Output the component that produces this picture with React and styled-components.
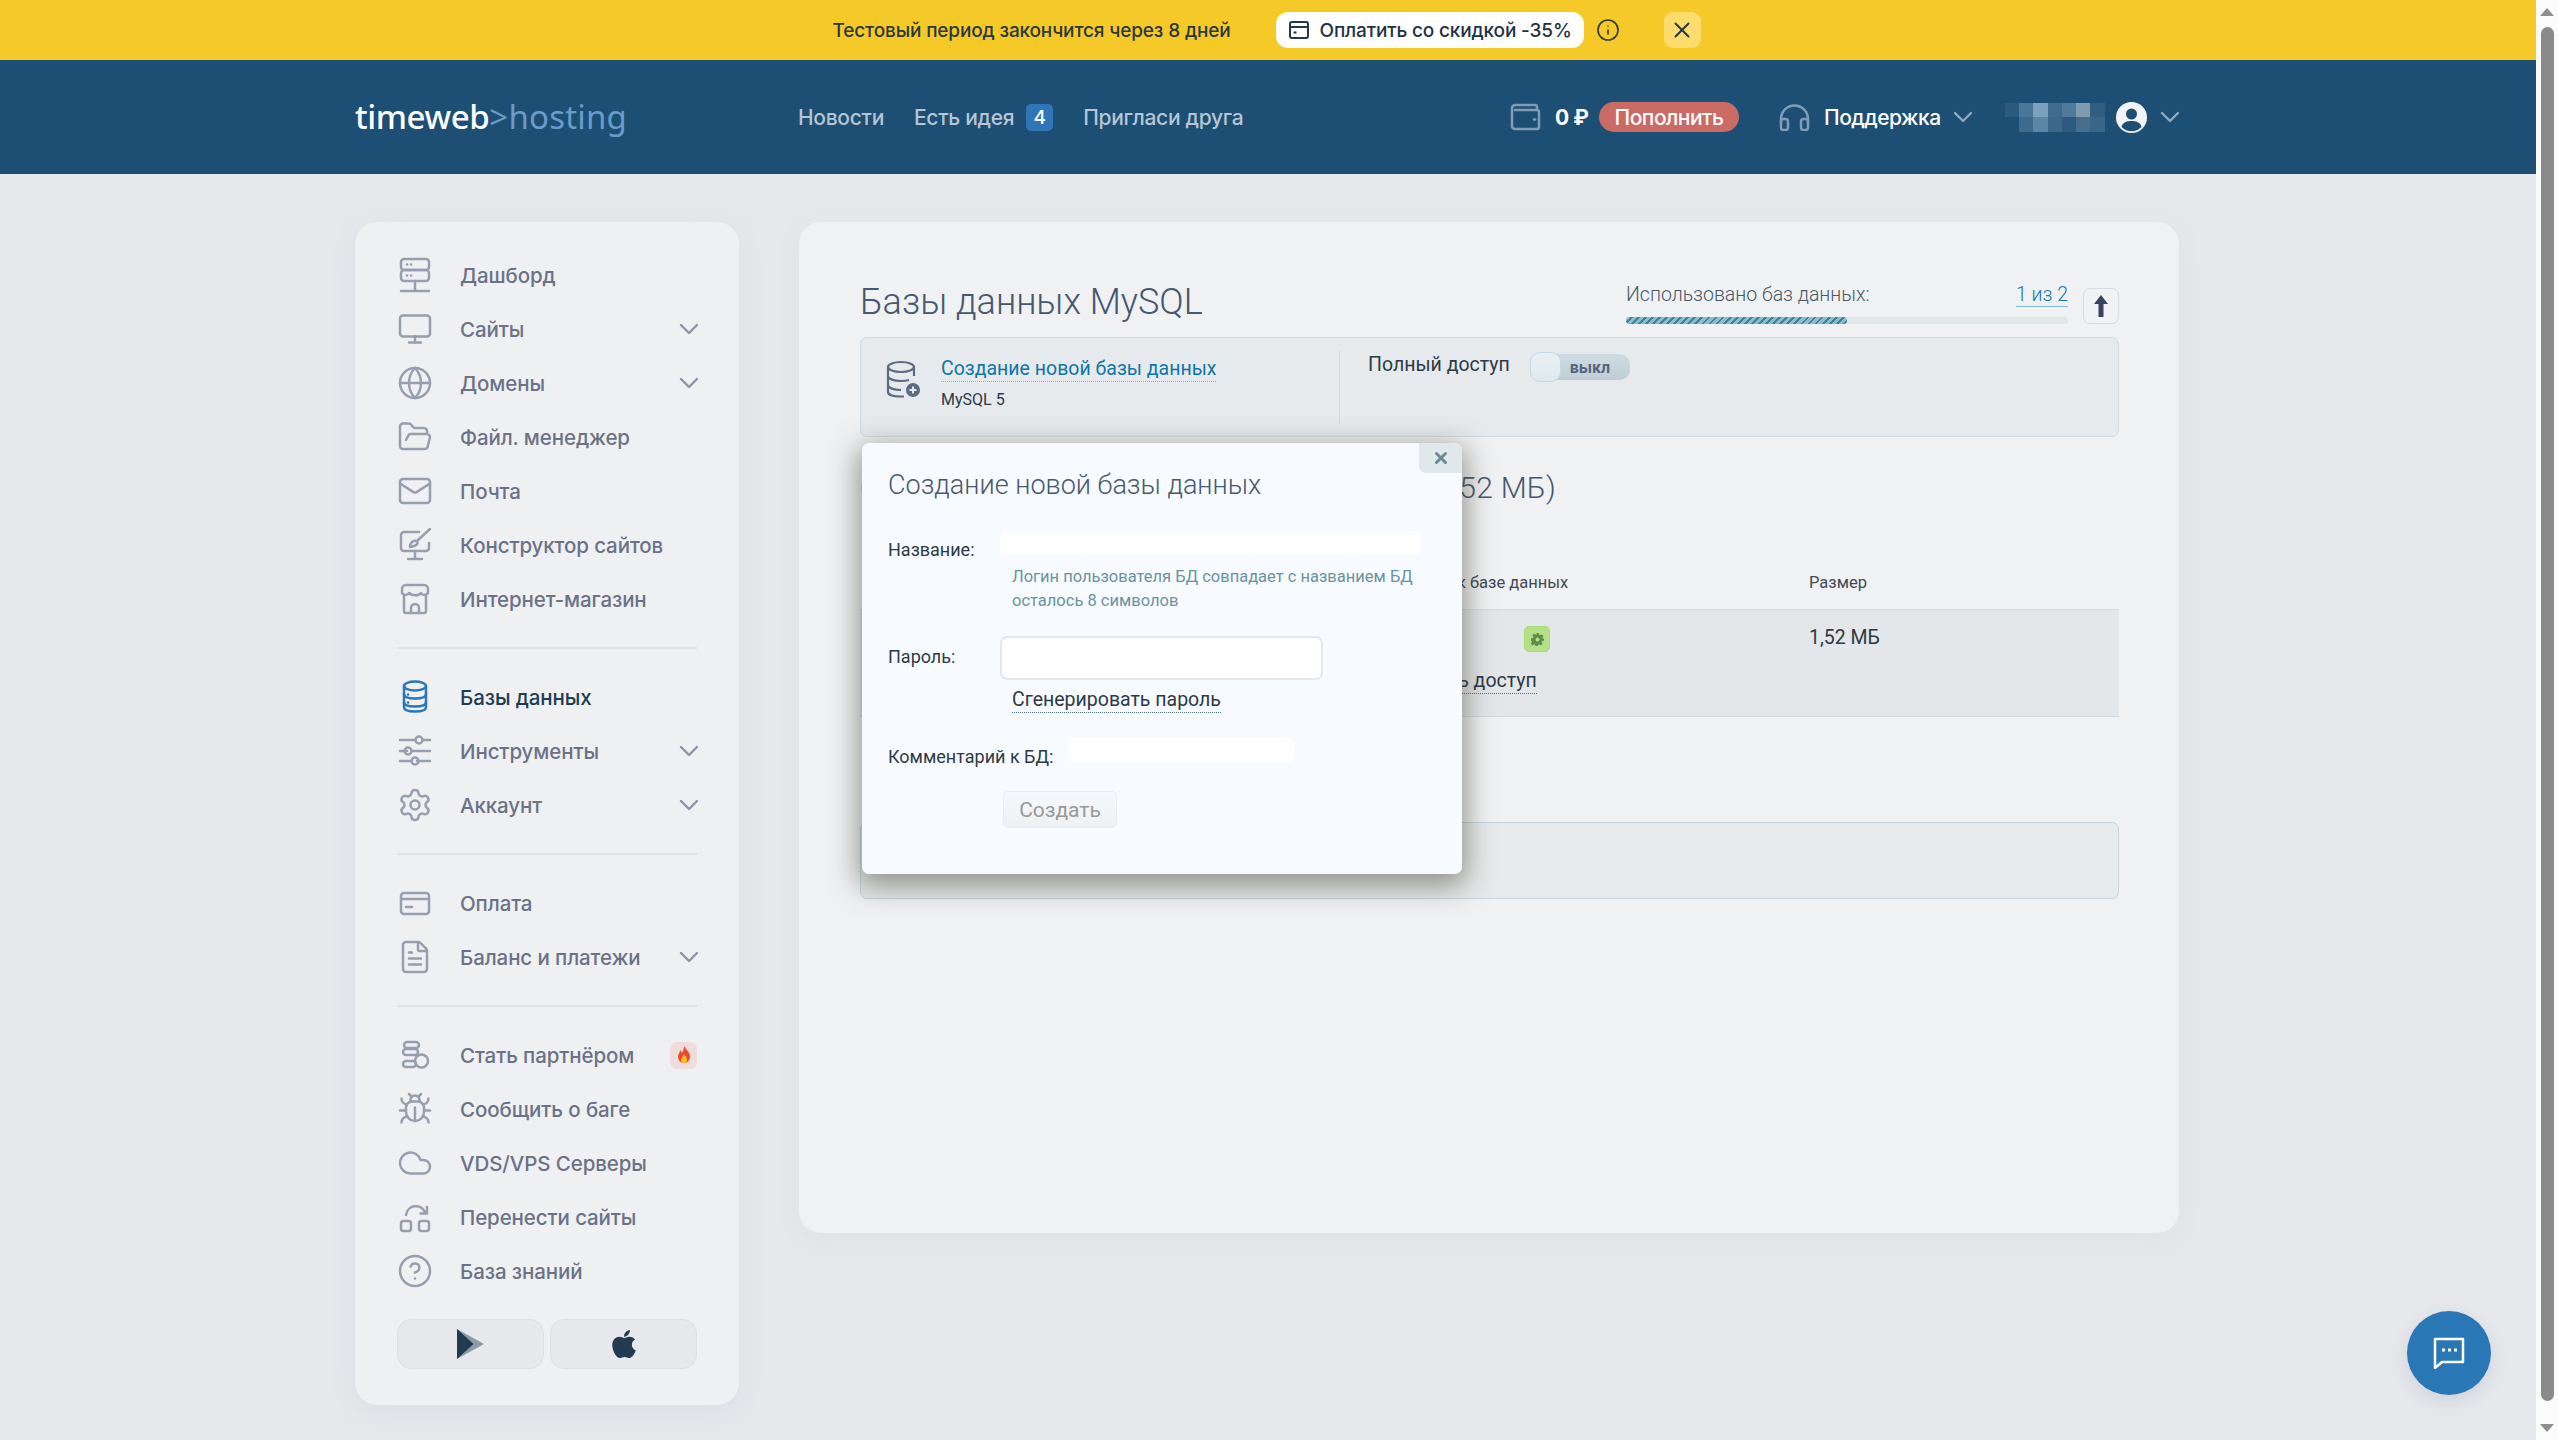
import React from 'react';
import styled, { createGlobalStyle } from 'styled-components';
import {
  Globe, FolderOpen, Mail, Settings, FileText, Bug, Cloud, CircleHelp,
  ChevronDown, X, Info, Monitor,
} from 'lucide-react';
import { FaApple } from 'react-icons/fa';

const GlobalStyle = createGlobalStyle`
  html, body { margin: 0; padding: 0; height: 100%; overflow: hidden; }
  body { background: #e6e8ec; font-family: Roboto, "Liberation Sans", sans-serif; }
  * { box-sizing: border-box; }
`;

const uiFont = `Inter, "Noto Sans", sans-serif`;

const Shell = styled.div`
  display: flex;
  width: 2558px;
  height: 1440px;
  overflow: hidden;
`;

const Page = styled.div`
  width: 2536px;
  display: flex;
  flex-direction: column;
  position: relative;
`;

const ScrollTrack = styled.div`
  width: 22px;
  background: #fbfbfb;
  display: flex;
  flex-direction: column;
  align-items: center;
  padding: 8px 0;
`;

const ScrollArrowUp = styled.div`
  width: 0;
  height: 0;
  border-left: 7px solid transparent;
  border-right: 7px solid transparent;
  border-bottom: 8px solid #8f8f8f;
`;

const ScrollArrowDown = styled(ScrollArrowUp)`
  border-bottom: 0;
  border-top: 8px solid #8f8f8f;
  margin-top: 23px;
`;

const ScrollThumb = styled.div`
  width: 13px;
  height: 1374px;
  margin-top: 11px;
  background: #8a8a8a;
  border-radius: 7px;
`;

// banner
const Banner = styled.div`
  height: 60px;
  padding-right: 3px;
  background: #f5ca28;
  display: flex;
  align-items: center;
  justify-content: center;
  font-family: ${uiFont};
  font-size: 19px;
  font-weight: 500;
  letter-spacing: -0.15px;
  color: #2c3842;
`;

const PayButton = styled.button`
  height: 36px;
  width: 308px;
  margin-left: 45px;
  border: 0;
  border-radius: 12px;
  background: #fff;
  color: #1e3344;
  font: inherit;
  letter-spacing: inherit;
  display: flex;
  align-items: center;
  gap: 11px;
  padding: 0 0 0 13px;
`;

const InfoWrap = styled.span`
  display: flex;
  margin-left: 12px;
  color: #2c3842;
`;

const BannerClose = styled.button`
  width: 37px;
  height: 36px;
  margin-left: 44px;
  border: 0;
  padding: 0;
  border-radius: 9px;
  background: #fbdc6c;
  color: #24384a;
  display: flex;
  align-items: center;
  justify-content: center;
`;

// top header
const Header = styled.header`
  height: 114px;
  background: #1d4e73;
  padding-left: 355px;
  display: flex;
  align-items: center;
  font-family: ${uiFont};
`;

const Logo = styled.div`
  width: 443px;
  padding-bottom: 2px;
  font-family: "Noto Sans", sans-serif;
  font-size: 33px;
  font-weight: 500;
  letter-spacing: -0.4px;
  color: #fff;
  span { color: #6a9ccb; font-weight: 400; letter-spacing: 0.2px; }
`;

const Nav = styled.nav`
  display: flex;
  align-items: center;
  width: 712px;
  font-size: 21px;
  font-weight: 500;
  letter-spacing: -0.3px;
  color: #b7c5d3;
`;

const NavLink = styled.a`
  margin-right: ${p => p.$gap}px;
`;

const CountBadge = styled.span`
  width: 27px;
  height: 27px;
  margin-right: 30px;
  border-radius: 5px;
  background: #2e76b5;
  color: #fff;
  font-size: 19px;
  display: flex;
  align-items: center;
  justify-content: center;
`;

const HeaderRight = styled.div`
  display: flex;
  align-items: center;
  color: #fff;
  font-size: 21px;
  font-weight: 500;
  letter-spacing: -0.5px;
`;

const Balance = styled.span`
  width: 32px;
  margin: 0 12px 0 14px;
  font-weight: 700;
  white-space: nowrap;
`;

const TopUp = styled.button`
  width: 140px;
  height: 30px;
  margin-right: 40px;
  border: 0;
  padding: 0;
  border-radius: 15px;
  background: #cb6b66;
  color: #fff;
  font: inherit;
  letter-spacing: inherit;
`;

const Support = styled.span`
  margin: 0 13px 0 14px;
`;

const HeadChevron = styled(ChevronDown)`
  color: #8fa9bd;
  flex: none;
  margin: 0 -7px;
`;

const Mosaic = styled.div`
  display: grid;
  grid-template-columns: repeat(7, 14.3px);
  grid-auto-rows: 14.5px;
  margin: 0 11px 0 33px;
`;

const MosaicCell = styled.i`
  background: ${p => p.$c};
`;

const Avatar = styled.svg`
  margin-right: 14px;
`;

// body
const Body = styled.div`
  display: flex;
  align-items: flex-start;
  gap: 60px;
  padding: 48px 0 0 355px;
`;

const Sidebar = styled.aside`
  width: 384px;
  height: 1183px;
  padding: 26px 42px 0;
  background: #eff0f2;
  border-radius: 22px;
  box-shadow: 0 6px 30px rgba(90, 100, 120, 0.07);
  font-family: ${uiFont};
`;

const MenuRow = styled.a`
  display: flex;
  align-items: center;
  height: 54px;
  font-size: 20.5px;
  font-weight: 500;
  letter-spacing: -0.1px;
  color: ${p => (p.$active ? '#1f3c53' : '#6b7287')};
  svg.lead { color: ${p => (p.$active ? '#2a77b6' : '#979eae')}; flex: none; }
`;

const MenuLabel = styled.span`
  flex: 1;
  margin-left: 27px;
  white-space: nowrap;
`;

const MenuChevron = styled(ChevronDown)`
  color: #8e95a6;
  margin: 0 -8px;
`;

const Divider = styled.hr`
  height: 2px;
  margin: 21px 0;
  border: 0;
  background: #dfe1e6;
`;

const FireBadge = styled.span`
  width: 27px;
  height: 27px;
  border-radius: 7px;
  background: #f0dcdc;
  display: flex;
  align-items: center;
  justify-content: center;
`;

const StoreRow = styled.div`
  display: flex;
  gap: 6px;
  margin-top: 21px;
`;

const StoreButton = styled.button`
  flex: 1;
  height: 50px;
  padding: 0;
  border: 1.5px solid #dee0e5;
  border-radius: 14px;
  background: #e7e8ec;
  color: #233b50;
  display: flex;
  align-items: center;
  justify-content: center;
`;

// main card
const Main = styled.main`
  position: relative;
  width: 1380px;
  height: 1011px;
  padding: 56px 60px 0 61px;
  background: #eff1f3;
  border-radius: 22px;
  box-shadow: 0 6px 30px rgba(90, 100, 120, 0.05);
  color: #2d3a45;
`;

const TopRow = styled.div`
  display: flex;
  height: 59px;
`;

const Title = styled.h1`
  flex: 1;
  margin: 0;
  font-size: 36px;
  line-height: 48px;
  font-weight: 300;
  color: #45586f;
`;

const Usage = styled.div`
  width: 442px;
  padding-top: 5px;
`;

const UsageHead = styled.div`
  display: flex;
  justify-content: space-between;
  height: 24px;
  font-size: 19.5px;
  line-height: 24px;
  font-weight: 300;
  color: #47586b;
`;

const UsageCount = styled.a`
  color: #1576ab;
  border-bottom: 1.5px solid #86b7d3;
`;

const ProgressTrack = styled.div`
  height: 7px;
  margin-top: 10px;
  border-radius: 4px;
  background: #e1e6e8;
`;

const ProgressFill = styled.div`
  height: 100%;
  width: 50%;
  border-radius: 4px;
  background: repeating-linear-gradient(135deg, #8cbccd 0 3px, #3f83a1 3px 5px);
`;

const UpButton = styled.button`
  width: 36px;
  height: 36px;
  margin: 10px 0 0 15px;
  padding: 0;
  background: #f0f2f4;
  border: 1.5px solid #d2dee3;
  border-radius: 7px;
  display: flex;
  align-items: center;
  justify-content: center;
`;

const OrderBox = styled.section`
  display: flex;
  height: 100px;
  background: #e6eaed;
  border: 1.5px solid #d0dce1;
  border-radius: 7px;
`;

const OrderLeft = styled.div`
  width: 479px;
  margin: 12px 0;
  padding: 6px 0 0 25px;
  border-right: 1.5px solid #d4dde1;
  display: flex;
  gap: 19px;
`;

const OrderText = styled.div`
  padding-top: 1px;
`;

const DottedLink = styled.a`
  display: inline-block;
  font-size: ${p => p.$size || 19.5}px;
  line-height: 24px;
  color: ${p => p.$color || '#2d3a45'};
  border-bottom: 1.5px dotted ${p => p.$line || '#4d6f80'};
  white-space: nowrap;
`;

const OrderMeta = styled.div`
  margin-top: 8px;
  font-size: 16px;
  line-height: 20px;
`;

const OrderRight = styled.div`
  display: flex;
  align-items: flex-start;
  gap: 20px;
  padding: 15px 0 0 28px;
  font-size: 19.5px;
  line-height: 24px;
`;

const Toggle = styled.div`
  position: relative;
  width: 100px;
  height: 26px;
  margin-top: 1px;
  padding-left: 40px;
  border-radius: 10px;
  background: linear-gradient(#cfdde2, #bfced5);
  font-size: 16px;
  font-weight: 700;
  line-height: 27px;
  color: #56657f;
`;

const ToggleKnob = styled.span`
  position: absolute;
  left: 0;
  top: -2px;
  width: 31px;
  height: 30px;
  border-radius: 10px;
  border: 1.5px solid #c4dae3;
  background: linear-gradient(#e9f0f3, #dfe9ee);
`;

const SubTitle = styled.h2`
  margin: 31px 0 0;
  height: 40px;
  font-size: 30px;
  line-height: 40px;
  font-weight: 300;
  letter-spacing: 0.24px;
  color: #45586f;
`;

const TableRow = styled.div`
  display: grid;
  grid-template-columns: 530px 419px 1fr;
`;

const TableHead = styled(TableRow)`
  margin-top: 48px;
  height: 53px;
  align-items: center;
  font-size: 16.5px;
  color: #3f4b57;
`;

const NameCell = styled.span`
  padding-left: 14px;
`;

const AccessHead = styled.span`
  padding-left: 7px;
`;

const TableBody = styled(TableRow)`
  height: 108px;
  padding-top: 16px;
  background: #e3e7ea;
  border-top: 1.5px solid #d0dce1;
  border-bottom: 1.5px solid #d0dce1;
  font-size: 19.5px;
  line-height: 24px;
`;

const StatusBadge = styled.span`
  width: 26px;
  height: 26px;
  margin-left: 134px;
  border-radius: 5px;
  background: #b3e086;
  border: 1px solid #a7dc78;
  display: flex;
  align-items: center;
  justify-content: center;
`;

const AccessLink = styled(DottedLink)`
  margin-top: 17px;
`;

const NoteBox = styled.div`
  height: 77px;
  margin-top: 105px;
  background: #e7eaeb;
  border: 1.5px solid #c6d5dc;
  border-radius: 7px;
`;

// modal
const Modal = styled.div`
  position: absolute;
  left: 63px;
  top: 221px;
  width: 600px;
  height: 431px;
  padding: 22px 0 0 26px;
  background: #f7fbff;
  border-radius: 7px;
  box-shadow: 0 8px 28px 4px rgba(60, 60, 40, 0.5);
`;

const ModalClose = styled.button`
  position: absolute;
  top: 0;
  right: 0;
  width: 43px;
  height: 30px;
  padding: 0;
  border: 0;
  border-radius: 0 7px 0 7px;
  background: #dfe8eb;
  color: #6e8b95;
  display: flex;
  align-items: center;
  justify-content: center;
`;

const ModalTitle = styled.h3`
  margin: 0 0 26px;
  font-size: 27px;
  line-height: 40px;
  font-weight: 300;
  color: #47586e;
`;

const FormRow = styled.div`
  display: flex;
  align-items: flex-start;
  margin-top: ${p => p.$mt || 0}px;
`;

const FormLabel = styled.label`
  width: ${p => p.$w}px;
  margin-top: ${p => p.$mt}px;
  flex: none;
  font-size: 18px;
  line-height: 24px;
  color: #2d3a45;
  white-space: nowrap;
`;

const TextField = styled.input`
  display: block;
  width: ${p => p.$w}px;
  height: ${p => p.$h}px;
  padding: 0 10px;
  background: #fff;
  border: ${p => (p.$framed ? '2px solid #e1e8ee' : '0')};
  border-radius: 7px;
  outline: 0;
`;

const FormHint = styled.div`
  margin: 3px 0 0 124px;
  font-size: 16.5px;
  line-height: 24px;
  color: #6a939e;
`;

const LinkLine = styled.div`
  margin: 8px 0 0 124px;
`;

const CreateButton = styled.button`
  display: block;
  width: 114px;
  height: 37px;
  margin: 22px 0 0 115px;
  padding: 0;
  border: 1.5px solid #e8edf0;
  border-radius: 5px;
  background: linear-gradient(#f6f9fb, #edf1f4);
  color: #999;
  font-family: Roboto, sans-serif;
  font-size: 21px;
`;

const ChatBubble = styled.button`
  position: absolute;
  left: 2407px;
  top: 1311px;
  width: 84px;
  height: 84px;
  padding: 0;
  border: 0;
  border-radius: 50%;
  background: #2a77b6;
  box-shadow: 0 6px 18px rgba(70, 80, 110, 0.14);
  display: flex;
  align-items: center;
  justify-content: center;
`;

const DbPlus = styled.svg`
  margin-top: 4px;
  flex: none;
`;

// drawn icons, 36px box centred on the row
const Stroke = ({ children }) => (
  <svg className="lead" width="36" height="36" viewBox="0 0 36 36" fill="none" stroke="currentColor" strokeWidth="2.5" strokeLinecap="round" strokeLinejoin="round">
    {children}
  </svg>
);

const lucide = { className: 'lead', size: 36, strokeWidth: 1.65 };

const DashboardIcon = () => (
  <Stroke>
    <rect x="4" y="2" width="28" height="11" rx="3" />
    <rect x="4" y="13" width="28" height="11" rx="3" />
    <path d="M18 24v8M4 34h28" />
    <path d="M10 7.5h.1M14 7.5h.1M10 18.5h.1M14 18.5h.1" />
  </Stroke>
);

const BuilderIcon = () => (
  <Stroke>
    <path d="M22 5H7a3 3 0 0 0-3 3v13a3 3 0 0 0 3 3h22a3 3 0 0 0 3-3v-5" />
    <path d="M18 24v7M11 32h14" />
    <path d="M33 2 21 13M13 20c0-4 3-7 6-6s2 5-6 6z" />
  </Stroke>
);

const StoreIcon = () => (
  <Stroke>
    <path d="M9 4h18a4 4 0 0 1 4 4v4c-3 3-6 2-7 0-2 3-9 3-12 0-1 2-5 3-7 0V8a4 4 0 0 1 4-4z" />
    <path d="M7 15v15a2 2 0 0 0 2 2h18a2 2 0 0 0 2-2V15" />
    <path d="M14 32v-5a4 4 0 0 1 8 0v5" />
  </Stroke>
);

const DatabaseIcon = () => (
  <Stroke>
    <ellipse cx="18" cy="7" rx="11" ry="4.5" />
    <path d="M7 7v21c0 3 5 4.500 11 4.500s11-1.500 11-4.500V7" />
    <path d="M7 15c0 3 5 4.500 11 4.500s11-1.500 11-4.500M7 23c0 3 5 4.500 11 4.500s11-1.500 11-4.500" />
    <path d="M11 15.500h.1M11 23.500h.1" />
  </Stroke>
);

const SlidersIcon = () => (
  <Stroke>
    <path d="M3 7h15M26 7h7M3 18h7M15 18h18M3 28h12M20 28h13" />
    <circle cx="22" cy="7" r="3.500" />
    <circle cx="11" cy="18" r="3.500" />
    <circle cx="18" cy="28" r="3.500" />
  </Stroke>
);

const CardIcon = () => (
  <Stroke>
    <rect x="4" y="8" width="28" height="21" rx="3" />
    <path d="M4 14h28M9 22h6" />
  </Stroke>
);

const CoinsIcon = () => (
  <Stroke>
    <rect x="7" y="5" width="15" height="6" rx="3" />
    <rect x="6" y="12" width="15" height="6" rx="3" />
    <rect x="6" y="24" width="13" height="6" rx="3" />
    <circle cx="24.500" cy="24" r="6.500" />
  </Stroke>
);

const TransferIcon = () => (
  <Stroke>
    <rect x="4" y="22" width="10" height="10" rx="2.500" />
    <rect x="22" y="22" width="10" height="10" rx="2.500" />
    <path d="M9 16a10 10 0 0 1 19-3M30 8v6.500h-6.500" />
  </Stroke>
);

const FlameIcon = () => (
  <svg width="14" height="18" viewBox="0 0 14 18">
    <path fill="#ea4b2a" d="M7 0c1 3 6 5 6 11a6 6 0 0 1-12 0c0-3 2-4 2-7 1 1 2 2 2 3 1-2 2-4 2-7z" />
    <path fill="#fbbf24" d="M7 8c1 2 3 3 3 6a3 3 0 0 1-6 0c0-2 2-3 3-6z" />
  </svg>
);

const PlayIcon = () => (
  <svg width="28" height="30" viewBox="0 0 28 30">
    <path fill="#8d9ca6" d="M0 0l27 15L0 30z" />
    <path fill="#233b50" d="M0 0l16.500 15L0 30z" />
  </svg>
);

const BillIcon = () => (
  <svg width="20" height="18" viewBox="0 0 20 18" fill="none" stroke="#24384a" strokeWidth="2">
    <rect x="1" y="1" width="18" height="16" rx="2" />
    <path d="M1 6h18M4.500 11.500h3" />
  </svg>
);

const WalletIcon = () => (
  <svg width="31" height="28" viewBox="0 0 31 28" fill="none" stroke="#7f9db4" strokeWidth="2.500" strokeLinecap="round" strokeLinejoin="round">
    <path d="M27 7V4a2 2 0 0 0-2-2H5a3.500 3.500 0 0 0-3 3.500V23a3 3 0 0 0 3 3h22a2 2 0 0 0 2-2V9a2 2 0 0 0-2-2H5" />
    <path d="M24 16.500h1" />
  </svg>
);

const HeadsetIcon = () => (
  <svg width="31" height="27" viewBox="0 0 31 27" fill="none" stroke="#7f9db4" strokeWidth="2.500" strokeLinecap="round" strokeLinejoin="round">
    <path d="M2 19v-4a13.500 13.500 0 0 1 27 0v4" />
    <rect x="2" y="15" width="7" height="11" rx="2.500" />
    <rect x="22" y="15" width="7" height="11" rx="2.500" />
  </svg>
);

const AvatarIcon = () => (
  <Avatar width="31" height="31" viewBox="0 0 31 31">
    <circle cx="15.500" cy="15.500" r="15.500" fill="#f2f4f6" />
    <circle cx="15.500" cy="12" r="5.500" fill="#1d4e73" />
    <path fill="#1d4e73" d="M5.500 25c1-5 5.500-6 10-6s9 1 10 6a14 14 0 0 1-20 0z" />
  </Avatar>
);

const DbPlusIcon = () => (
  <DbPlus width="36" height="38" viewBox="0 0 36 38" fill="none" stroke="#5a6b82" strokeWidth="2.200">
    <ellipse cx="15" cy="7" rx="13" ry="5" />
    <path d="M2 7v25c0 2.500 5 4.500 13 4.500h3M28 7v9M2 16c0 3 6 5 13 5 3 0 6-.4 8-1M2 25c0 3 6 5 13 5" />
    <circle cx="27" cy="30" r="7" fill="#5a6b82" stroke="none" />
    <path d="M27 26.500v7M23.500 30h7" stroke="#e6eaed" strokeWidth="2" />
  </DbPlus>
);

const ArrowUp = () => (
  <svg width="14" height="22" viewBox="0 0 14 22">
    <path fill="#36455f" d="M7 0l7 9H9.500v13h-5V9H0z" />
  </svg>
);

const GearBadge = () => (
  <svg width="13" height="13" viewBox="0 0 16 16">
    <path fill="#5e8a4e" d="M6.500 0h3l.4 2.400 1.300.6 2-1.400 2.100 2.100-1.400 2 .6 1.300L16 6.500v3l-2.500.4-.6 1.300 1.400 2-2.100 2.100-2-1.400-1.300.6-.4 2.500h-3l-.4-2.500-1.300-.6-2 1.400-2.100-2.100 1.400-2-.6-1.300L0 9.500v-3l2.500-.4.6-1.300-1.400-2 2.100-2.100 2 1.400 1.300-.6z" />
    <circle cx="8" cy="8" r="2.500" fill="#b3e086" />
  </svg>
);

const ChatIcon = () => (
  <svg width="32" height="32" viewBox="0 0 32 32" fill="none">
    <path d="M2 2h28v23H9l-7 6z" stroke="#fff" strokeWidth="2.500" strokeLinejoin="round" />
    <path d="M9 13h3M15 13h3M21 13h3" stroke="#fff" strokeWidth="3" />
  </svg>
);

const mosaic = [
  '#2b5a7e', '#4a7797', '#7ba2bd', '#3f6b8d', '#4f7b99', '#7f9bad', '#2f5e81',
  '#1d4e73', '#3e6a8c', '#5a87a6', '#3c6789', '#2c5b7f', '#456f8f', '#3a6688',
];

const Chevron = () => <MenuChevron size={32} strokeWidth={1.85} />;

const sections = [
  [
    { label: 'Дашборд', icon: <DashboardIcon /> },
    { label: 'Сайты', icon: <Monitor {...lucide} />, more: true },
    { label: 'Домены', icon: <Globe {...lucide} />, more: true },
    { label: 'Файл. менеджер', icon: <FolderOpen {...lucide} /> },
    { label: 'Почта', icon: <Mail {...lucide} /> },
    { label: 'Конструктор сайтов', icon: <BuilderIcon /> },
    { label: 'Интернет-магазин', icon: <StoreIcon /> },
  ],
  [
    { label: 'Базы данных', icon: <DatabaseIcon />, active: true },
    { label: 'Инструменты', icon: <SlidersIcon />, more: true },
    { label: 'Аккаунт', icon: <Settings {...lucide} />, more: true },
  ],
  [
    { label: 'Оплата', icon: <CardIcon /> },
    { label: 'Баланс и платежи', icon: <FileText {...lucide} />, more: true },
  ],
  [
    { label: 'Стать партнёром', icon: <CoinsIcon />, fire: true },
    { label: 'Сообщить о баге', icon: <Bug {...lucide} /> },
    { label: 'VDS/VPS Серверы', icon: <Cloud {...lucide} /> },
    { label: 'Перенести сайты', icon: <TransferIcon /> },
    { label: 'База знаний', icon: <CircleHelp {...lucide} /> },
  ],
];

export default function App() {
  return (
    <Shell>
      <GlobalStyle />
      <Page>
        <Banner>
          Тестовый период закончится через 8 дней
          <PayButton><BillIcon />Оплатить со скидкой -35%</PayButton>
          <InfoWrap><Info size={24} strokeWidth={1.6} /></InfoWrap>
          <BannerClose><X size={26} strokeWidth={1.8} /></BannerClose>
        </Banner>

        <Header>
          <Logo>timeweb<span>&gt;hosting</span></Logo>
          <Nav>
            <NavLink $gap={30}>Новости</NavLink>
            <NavLink $gap={12}>Есть идея</NavLink>
            <CountBadge>4</CountBadge>
            <NavLink $gap={0}>Пригласи друга</NavLink>
          </Nav>
          <HeaderRight>
            <WalletIcon />
            <Balance>0 ₽</Balance>
            <TopUp>Пополнить</TopUp>
            <HeadsetIcon />
            <Support>Поддержка</Support>
            <HeadChevron size={32} strokeWidth={1.8} />
            <Mosaic>
              {mosaic.map((c, i) => <MosaicCell key={i} $c={c} />)}
            </Mosaic>
            <AvatarIcon />
            <HeadChevron size={32} strokeWidth={1.8} />
          </HeaderRight>
        </Header>

        <Body>
          <Sidebar>
            {sections.map((items, i) => (
              <React.Fragment key={i}>
                {i > 0 && <Divider />}
                {items.map(item => (
                  <MenuRow key={item.label} $active={item.active}>
                    {item.icon}
                    <MenuLabel>{item.label}</MenuLabel>
                    {item.more && <Chevron />}
                    {item.fire && <FireBadge><FlameIcon /></FireBadge>}
                  </MenuRow>
                ))}
              </React.Fragment>
            ))}
            <StoreRow>
              <StoreButton><PlayIcon /></StoreButton>
              <StoreButton><FaApple size={32} /></StoreButton>
            </StoreRow>
          </Sidebar>

          <Main>
            <TopRow>
              <Title>Базы данных MySQL</Title>
              <Usage>
                <UsageHead>
                  Использовано баз данных:
                  <UsageCount>1 из 2</UsageCount>
                </UsageHead>
                <ProgressTrack><ProgressFill /></ProgressTrack>
              </Usage>
              <UpButton><ArrowUp /></UpButton>
            </TopRow>

            <OrderBox>
              <OrderLeft>
                <DbPlusIcon />
                <OrderText>
                  <DottedLink $color="#0f76a8" $line="#7fb2cc">Создание новой базы данных</DottedLink>
                  <OrderMeta>MySQL 5</OrderMeta>
                </OrderText>
              </OrderLeft>
              <OrderRight>
                Полный доступ
                <Toggle><ToggleKnob />выкл</Toggle>
              </OrderRight>
            </OrderBox>

            <SubTitle>Список баз данных, всего занято места (1,52 МБ)</SubTitle>

            <TableHead>
              <NameCell>База данных</NameCell>
              <AccessHead>Доступ к базе данных</AccessHead>
              <span>Размер</span>
            </TableHead>
            <TableBody>
              <NameCell>db_main</NameCell>
              <div>
                <StatusBadge><GearBadge /></StatusBadge>
                <AccessLink>Закрыть доступ</AccessLink>
              </div>
              <span>1,52 МБ</span>
            </TableBody>

            <NoteBox />

            <Modal>
              <ModalClose><X size={18} strokeWidth={4} /></ModalClose>
              <ModalTitle>Создание новой базы данных</ModalTitle>
              <FormRow>
                <FormLabel $w={112} $mt={7}>Название:</FormLabel>
                <TextField $w={421} $h={24} />
              </FormRow>
              <FormHint>
                Логин пользователя БД совпадает с названием БД<br />
                осталось 8 символов
              </FormHint>
              <FormRow $mt={23}>
                <FormLabel $w={112} $mt={9}>Пароль:</FormLabel>
                <TextField $w={323} $h={44} $framed />
              </FormRow>
              <LinkLine><DottedLink>Сгенерировать пароль</DottedLink></LinkLine>
              <FormRow $mt={25}>
                <FormLabel $w={180} $mt={7}>Комментарий к БД:</FormLabel>
                <TextField $w={227} $h={24} />
              </FormRow>
              <CreateButton>Создать</CreateButton>
            </Modal>
          </Main>
        </Body>

        <ChatBubble><ChatIcon /></ChatBubble>
      </Page>
      <ScrollTrack>
        <ScrollArrowUp />
        <ScrollThumb />
        <ScrollArrowDown />
      </ScrollTrack>
    </Shell>
  );
}
